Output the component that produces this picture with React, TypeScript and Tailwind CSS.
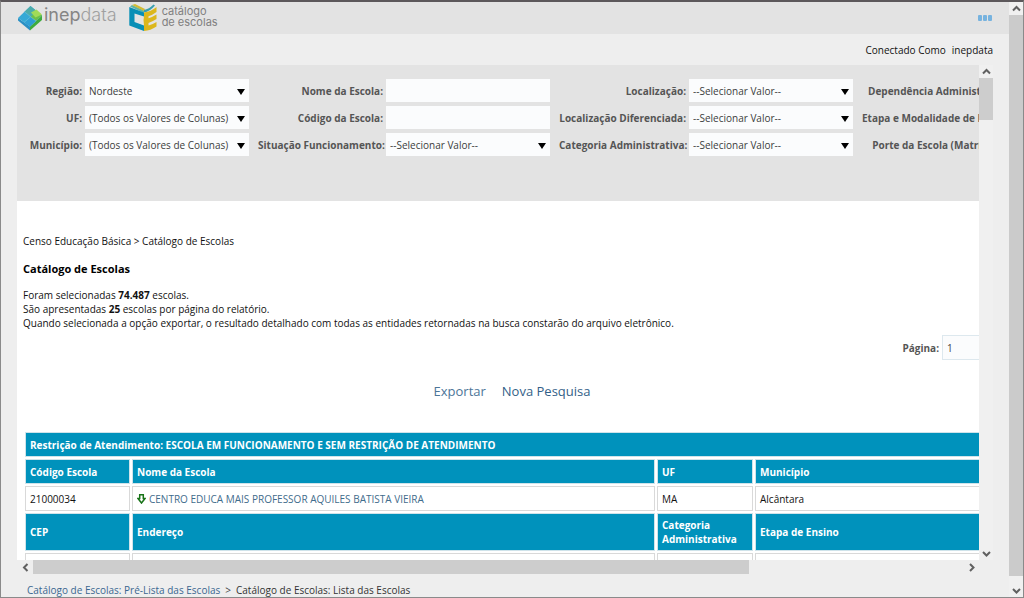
import { useId, type ReactNode } from 'react';

type Direction = 'up' | 'down' | 'left' | 'right';

const chevrons: Record<Direction, string> = {
  up: 'M1 6.5 4.5 3 8 6.5',
  down: 'M1 3 4.5 6.5 8 3',
  left: 'M6.5 1 3 4.5 6.5 8',
  right: 'M3 1 6.5 4.5 3 8',
};

function ScrollButton({ direction, label, className }: { direction: Direction; label: string; className: string }) {
  return (
    <button type="button" aria-label={label} className={`flex shrink-0 items-center justify-center ${className}`}>
      <svg width="9" height="9" viewBox="0 0 9 9" fill="none" stroke="#606060" strokeWidth="2">
        <path d={chevrons[direction]} />
      </svg>
    </button>
  );
}

function InepLogo() {
  return (
    <svg width="26" height="26" viewBox="0 0 26 26" aria-hidden="true">
      <path d="M1 13 13 21.5V25.500L1 15.500Z" fill="#2a8fc4" />
      <path d="M13 21.500 25 10.500V15L13 25.500Z" fill="#3eac3e" />
      <path d="M1 13 13.500 1 25 10.500 13 21.500Z" fill="#35a9d6" />
      <path d="M7.500 6.800 13.500 1 19.500 6 13.500 12Z" fill="#4bacac" />
      <path d="M13.500 12 19 16 13 21.500 7 17.500Z" fill="#2f9fd4" />
      <path d="M13.500 12 19.500 6 25 10.500 19 16Z" fill="#6cc04a" />
      <path d="M14 7.500 19.500 4.500 25 9.500 18.500 12.500Z" fill="#a2db58" />
      <path d="M7.500 6.800 19 16M7 17.500 13.500 12" fill="none" stroke="#72c5df" strokeWidth=".6" />
    </svg>
  );
}

function CatalogLogo() {
  return (
    <svg width="28" height="28" viewBox="0 0 28 28" aria-hidden="true">
      <path d="M1 2.500 3 1 15 6.500V9Z" fill="#5fb4a4" />
      <path d="M3 1 6 0 16 5 15 7Z" fill="#d3bb35" />
      <path d="M15 6Q20 5 24.500 .500L26 1.500Q21 7.500 15 8.500Z" fill="#379fae" />
      <path d="M.300 3 15 8.500V12.500L5.500 9.500V18L15 21.500V27L.300 21.500Z" fill="#088fb6" />
      <path
        d="M15 8.500Q22 7.500 27.500 3V8Q23.500 11 19.500 12.300V14.300Q23.500 13 27.500 10.500V15Q23.500 17.500 19.500 19V21.500Q23.500 20.500 27.500 18V22.500Q21.500 26.500 15 27V21.500L14.500 16 15 12.500Z"
        fill="#dcb71c"
      />
    </svg>
  );
}

const fieldClass =
  'h-[23px] w-full appearance-none rounded-none border-0 bg-[#fbfcfd] pl-1 pr-5 text-[10px] leading-4 text-[#3c3c3c] outline-none';

function Field({ label, value }: { label: string; value?: string }) {
  const id = useId();
  return (
    <>
      <label htmlFor={id} className="text-right font-bold whitespace-nowrap text-[#555]">
        {label}:
      </label>
      <div className="relative mr-[6px]">
        {value === undefined ? (
          <input id={id} type="text" className={fieldClass} />
        ) : (
          <>
            <select id={id} className={fieldClass}>
              <option>{value}</option>
            </select>
            <svg
              className="pointer-events-none absolute top-[10px] right-[4px]"
              width="8"
              height="6"
              viewBox="0 0 8 6"
              aria-hidden="true"
            >
              <path d="M0 0H8L4 6Z" fill="#000" />
            </svg>
          </>
        )}
      </div>
    </>
  );
}

const all = '(Todos os Valores de Colunas)';
const pick = '--Selecionar Valor--';

const filters: { label: string; value?: string }[] = [
  { label: 'Região', value: 'Nordeste' },
  { label: 'Nome da Escola' },
  { label: 'Localização', value: pick },
  { label: 'Dependência Administrativa', value: pick },
  { label: 'UF', value: all },
  { label: 'Código da Escola' },
  { label: 'Localização Diferenciada', value: pick },
  { label: 'Etapa e Modalidade de Ensino', value: pick },
  { label: 'Município', value: all },
  { label: 'Situação Funcionamento', value: pick },
  { label: 'Categoria Administrativa', value: pick },
  { label: 'Porte da Escola (Matrículas)', value: pick },
];

function Th({ children, span, tall }: { children: ReactNode; span?: number; tall?: boolean }) {
  return (
    <th
      colSpan={span}
      className={`${tall ? 'h-[38px]' : 'h-[25px]'} border border-[#cfe3ea] bg-[#0092bc] px-1 text-left font-bold text-white`}
    >
      {children}
    </th>
  );
}

function Td({ children }: { children?: ReactNode }) {
  return <td className="h-[25px] border border-[#d9d9d9] bg-white px-1 text-[#111]">{children}</td>;
}

function SchoolTable() {
  return (
    <table className="w-full table-fixed border-separate border-spacing-[2px]">
      <colgroup>
        <col className="w-[105px]" />
        <col className="w-[523px]" />
        <col className="w-[96px]" />
        <col />
      </colgroup>
      <tbody>
        <tr>
          <Th span={4}>Restrição de Atendimento: ESCOLA EM FUNCIONAMENTO E SEM RESTRIÇÃO DE ATENDIMENTO</Th>
        </tr>
        <tr>
          <Th>Código Escola</Th>
          <Th>Nome da Escola</Th>
          <Th>UF</Th>
          <Th>Município</Th>
        </tr>
        <tr>
          <Td>21000034</Td>
          <Td>
            <a href="#escola" className="flex items-center gap-[3px] text-[#3f6c8c]">
              <svg width="9" height="10" viewBox="0 0 9 10" aria-hidden="true">
                <path d="M2.700 .800H6.300V4.500H8L4.500 9 1 4.500H2.700Z" fill="#fff" stroke="#187318" strokeWidth="1.500" />
              </svg>
              CENTRO EDUCA MAIS PROFESSOR AQUILES BATISTA VIEIRA
            </a>
          </Td>
          <Td>MA</Td>
          <Td>Alcântara</Td>
        </tr>
        <tr>
          <Th tall>CEP</Th>
          <Th tall>Endereço</Th>
          <Th tall>Categoria Administrativa</Th>
          <Th tall>Etapa de Ensino</Th>
        </tr>
        <tr>
          <Td />
          <Td />
          <Td />
          <Td />
        </tr>
      </tbody>
    </table>
  );
}

export default function App() {
  return (
    <div className="flex h-screen overflow-hidden border border-t-2 border-[#8a8a8a] border-t-[#5c585b] bg-[#eeeeee] font-['Open_Sans','Noto_Sans',sans-serif] text-[10px] leading-[14px] text-[#111]">
      <div className="flex min-w-0 flex-1 flex-col">
        <header className="flex h-8 shrink-0 items-center bg-[#e3e3e3] pr-[17px] pl-4">
          <div className="flex items-center gap-px">
            <InepLogo />
            <span className="pb-[6px] font-['Inter',sans-serif] text-[18px] leading-6 font-normal text-[#858585]">
              inep<span className="font-light text-[#a0a0a0]">data</span>
            </span>
          </div>
          <div className="ml-3 flex items-center gap-[5px]">
            <CatalogLogo />
            <div className="pb-[2px] font-['Inter',sans-serif] text-[11px] leading-[11px] text-[#808080]">
              <div>catálogo</div>
              <div>de escolas</div>
            </div>
          </div>
          <button type="button" aria-label="Mais opções" className="ml-auto flex gap-px">
            <span className="h-[6px] w-1 rounded-[1px] bg-[#77b3df]" />
            <span className="h-[6px] w-1 rounded-[1px] bg-[#77b3df]" />
            <span className="h-[6px] w-1 rounded-[1px] bg-[#77b3df]" />
          </button>
        </header>

        <div className="flex h-[31px] shrink-0 items-center justify-end gap-[6px] pr-4">
          <span>Conectado Como</span>
          <span>inepdata</span>
        </div>

        <div className="mr-4 ml-4 flex min-h-0 flex-1">
          <main className="min-w-0 flex-1 overflow-hidden bg-white">
            <div className="w-[1253px]">
              <form className="grid h-[136px] grid-cols-[65px_170px_125px_170px_127px_170px_max-content_170px] content-start items-center gap-x-[3px] gap-y-1 bg-[#e3e3e3] pt-[14px]">
                {filters.map((filter) => (
                  <Field key={filter.label} {...filter} />
                ))}
              </form>

              <div className="w-[990px] pt-[33px] pl-[6px]">
                <p>Censo Educação Básica &gt; Catálogo de Escolas</p>
                <h1 className="mt-3 text-[11px] leading-[18px] font-bold text-black">Catálogo de Escolas</h1>
                <p className="mt-[10px]">
                  Foram selecionadas <b>74.487</b> escolas.
                  <br />
                  São apresentadas <b>25</b> escolas por página do relatório.
                  <br />
                  Quando selecionada a opção exportar, o resultado detalhado com todas as entidades retornadas na busca
                  constarão do arquivo eletrônico.
                </p>
                <div className="mt-[5px] flex items-center justify-end gap-[3px]">
                  <label htmlFor="pagina" className="font-bold text-[#555]">
                    Página:
                  </label>
                  <input
                    id="pagina"
                    type="text"
                    defaultValue="1"
                    className="h-[25px] w-[65px] border border-[#dde8ee] bg-[#fbfcfd] px-1 text-[10px] text-[#444] outline-none"
                  />
                </div>
              </div>

              <nav className="mt-[21px] flex w-[990px] justify-center gap-4 text-[13px] leading-5">
                <a href="#exportar" className="text-[#4c7598]">
                  Exportar
                </a>
                <a href="#nova-pesquisa" className="text-[#335f88]">
                  Nova Pesquisa
                </a>
              </nav>

              <div className="mt-[29px] pr-3 pl-[6px]">
                <SchoolTable />
              </div>
            </div>
          </main>
          <div className="flex w-[14px] shrink-0 flex-col bg-[#f0f0f0]">
            <ScrollButton direction="up" label="Rolar para cima" className="h-[13px]" />
            <div className="h-[42px] bg-[#cdcdcd]" />
            <ScrollButton direction="down" label="Rolar para baixo" className="mt-auto h-[13px]" />
          </div>
        </div>

        <div className="mr-[30px] ml-4 flex h-[14px] shrink-0">
          <ScrollButton direction="left" label="Rolar para a esquerda" className="w-4" />
          <div className="flex-1">
            <div className="h-full w-[77%] bg-[#cdcdcd]" />
          </div>
          <ScrollButton direction="right" label="Rolar para a direita" className="w-4" />
        </div>

        <footer className="flex h-[23px] shrink-0 items-center gap-[5px] pt-2 pl-[26px]">
          <a href="#pre-lista" className="text-[#3a6790]">
            Catálogo de Escolas: Pré-Lista das Escolas
          </a>
          <span className="text-[#444]">&gt;</span>
          <span className="text-[#333]">Catálogo de Escolas: Lista das Escolas</span>
        </footer>
      </div>

      <div className="flex w-[14px] shrink-0 flex-col bg-[#f0f0f0]">
        <ScrollButton direction="up" label="Página para cima" className="h-[13px]" />
        <div className="flex-1 bg-[#cbcbcb]" />
        <ScrollButton direction="down" label="Página para baixo" className="h-[21px] pt-2" />
      </div>
    </div>
  );
}
